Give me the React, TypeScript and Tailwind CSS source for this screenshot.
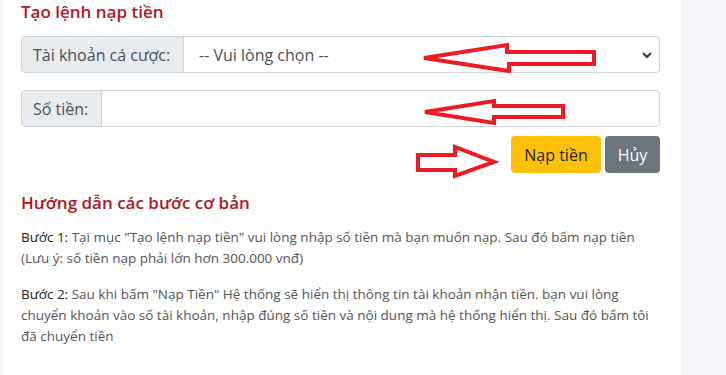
import React from "react";

export default function App() {
  return (
    <div
      className="relative flex w-[726px] h-[375px] overflow-hidden bg-white"
      style={{ fontFamily: '"Open Sans", "Noto Sans", sans-serif' }}
    >
      <div className="w-[3px] bg-[#f4f5f9]" />
      <div className="flex-1 pl-[18px] pr-[21px]">
        <h2 className="text-[17px] leading-[24px] font-semibold text-[#b3161b]">Tạo lệnh nạp tiền</h2>

        <div className="mt-[12px] flex h-[37px] rounded-[4px] border border-[#ced4da]">
          <div className="flex items-center w-[162px] shrink-0 bg-[#e9ecef] border-r border-[#ced4da] pl-[11px] text-[16px] text-[#495057] rounded-l-[4px]">
            Tài khoản cá cược:
          </div>
          <div className="flex-1 flex items-center justify-between pl-[15px] pr-[6px] text-[16px] text-[#495057]">
            <span>-- Vui lòng chọn --</span>
            <svg width="12" height="10" viewBox="0 0 12 10">
              <path d="M2 3 L6 7 L10 3" fill="none" stroke="#343a40" strokeWidth="2" />
            </svg>
          </div>
        </div>

        <div className="mt-[17px] flex h-[37px] rounded-[4px] border border-[#ced4da]">
          <div className="flex items-center w-[80px] shrink-0 bg-[#e9ecef] border-r border-[#ced4da] pl-[11px] text-[16px] text-[#495057] rounded-l-[4px]">
            Số tiền:
          </div>
          <div className="flex-1" />
        </div>

        <div className="mt-[9px] flex justify-end gap-[4px]">
          <button className="h-[37px] w-[90px] rounded-[4px] bg-[#ffc107] text-[16px] text-[#212529]">Nạp tiền</button>
          <button className="h-[37px] w-[55px] rounded-[4px] bg-[#6c757d] text-[16px] text-white">Hủy</button>
        </div>

        <h3 className="mt-[18px] text-[17px] leading-[24px] font-semibold text-[#b3161b]">Hướng dẫn các bước cơ bản</h3>

        <p className="mt-[12px] text-[13.5px] leading-[21px] text-[#555]">
          <span className="text-[#222] font-medium">Bước 1:</span> Tại mục "Tạo lệnh nạp tiền" vui lòng nhập số tiền mà bạn muốn nạp. Sau đó bấm nạp tiền (Lưu ý: số tiền nạp phải lớn hơn 300.000 vnđ)
        </p>
        <p className="mt-[15px] text-[13.5px] leading-[21px] text-[#555]">
          <span className="text-[#222] font-medium">Bước 2:</span> Sau khi bấm "Nạp Tiền" Hệ thống sẽ hiển thị thông tin tài khoản nhận tiền. bạn vui lòng chuyển khoản vào số tài khoản, nhập đúng số tiền và nội dung mà hệ thống hiển thị. Sau đó bấm tôi đã chuyển tiền
        </p>
      </div>
      <div className="w-[45px] bg-[#f5f6fa]" />

      <svg className="absolute left-0 top-0 pointer-events-none" width="726" height="375">
        <g fill="none" stroke="#ed1c24" strokeWidth="4" strokeLinejoin="miter">
          <polygon points="424,58 507,45 507,52 594,52 594,64 509,64 509,71" />
          <polygon points="425,112 494,101 494,106 563,106 563,117 494,117 494,123" />
          <polygon points="418,155 455,155 455,147 494,162 455,176 455,170 418,170" />
        </g>
      </svg>
    </div>
  );
}
